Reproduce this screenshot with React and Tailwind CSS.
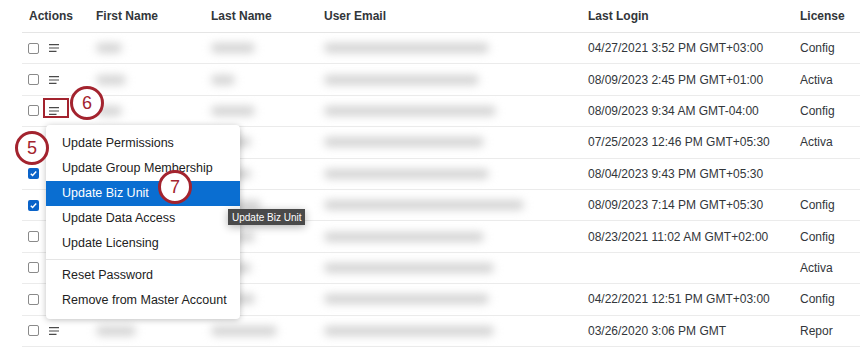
import React from 'react';

const rows = [
  { first: 26, last: 44, email: 165, login: '04/27/2021 3:52 PM GMT+03:00', lic: 'Config', menu: true },
  { first: 30, last: 24, email: 155, login: '08/09/2023 2:45 PM GMT+01:00', lic: 'Activa', menu: true },
  { first: 26, last: 44, email: 172, login: '08/09/2023 9:34 AM GMT-04:00', lic: 'Config', menu: true },
  { first: 30, last: 40, email: 160, login: '07/25/2023 12:46 PM GMT+05:30', lic: 'Activa', menu: true },
  { first: 34, last: 40, email: 165, login: '08/04/2023 9:43 PM GMT+05:30', lic: '', checked: true },
  { first: 30, last: 50, email: 200, login: '08/09/2023 7:14 PM GMT+05:30', lic: 'Config', checked: true },
  { first: 30, last: 44, email: 160, login: '08/23/2021 11:02 AM GMT+02:00', lic: 'Config' },
  { first: 32, last: 40, email: 170, login: '', lic: 'Activa' },
  { first: 30, last: 44, email: 165, login: '04/22/2021 12:51 PM GMT+03:00', lic: 'Config' },
  { first: 40, last: 66, email: 170, login: '03/26/2020 3:06 PM GMT', lic: 'Repor', menu: true },
];

function Hamburger() {
  return (
    <svg width="12" height="10" viewBox="0 0 12 10" className="text-[#4a4a4a]">
      <path d="M1 1.7h10M1 5h10M1 8.3h7.5" stroke="currentColor" strokeWidth="1.2" fill="none" />
    </svg>
  );
}

function Checkbox({ checked }) {
  if (checked) {
    return (
      <div className="w-[11px] h-[11px] rounded-[2px] bg-[#0a63c9] flex items-center justify-center">
        <svg width="9" height="9" viewBox="0 0 10 10">
          <path d="M2 5.2l2 2 4-4.4" stroke="white" strokeWidth="1.6" fill="none" />
        </svg>
      </div>
    );
  }
  return <div className="w-[11px] h-[11px] rounded-[2px] border border-[#8a8a8a] bg-white" />;
}

function Blur({ w }) {
  return <div className="h-[10px] rounded-full bg-[#d4d4d4] blur-[4px]" style={{ width: w }} />;
}

function Badge({ n, className }) {
  return (
    <div className={`absolute w-[34px] h-[34px] rounded-full border-[3px] border-[#a3232e] bg-white flex items-center justify-center text-[#a3232e] text-[18px] ${className}`}>
      {n}
    </div>
  );
}

const menuItems = ['Update Permissions', 'Update Group Membership', 'Update Biz Unit', 'Update Data Access', 'Update Licensing'];

export default function App() {
  return (
    <div className="relative w-[860px] h-[351px] overflow-hidden bg-white text-[12px] text-[#32363a]" style={{ fontFamily: '"Liberation Sans", Arial, sans-serif' }}>
      <div className="flex h-[33px] items-center ml-[22px] pl-[7px] font-bold text-[12px] text-[#32363a] border-b border-[#e5e5e5]">
        <div className="w-[67px]">Actions</div>
        <div className="w-[115px]">First Name</div>
        <div className="w-[113px]">Last Name</div>
        <div className="w-[264px]">User Email</div>
        <div className="w-[212px]">Last Login</div>
        <div>License</div>
      </div>
      <div className="ml-[22px]">
        {rows.map((r, i) => (
          <div key={i} className="flex h-[31.4px] items-center border-b border-[#ebebeb]">
            <div className="w-[26px] pl-[6px]"><Checkbox checked={r.checked} /></div>
            <div className="w-[48px] flex">{r.menu && <Hamburger />}</div>
            <div className="w-[115px]"><Blur w={r.first} /></div>
            <div className="w-[113px]"><Blur w={r.last} /></div>
            <div className="w-[264px]"><Blur w={r.email} /></div>
            <div className="w-[212px]">{r.login}</div>
            <div>{r.lic}</div>
          </div>
        ))}
      </div>

      {/* red highlight box */}
      <div className="absolute left-[43px] top-[98px] w-[26px] h-[20px] border-2 border-[#a3232e]" />

      {/* context menu */}
      <div className="absolute left-[46px] top-[125px] w-[194px] bg-white rounded-[4px] shadow-[0_1px_6px_rgba(0,0,0,0.25)] py-[6px] text-[12.5px]">
        {menuItems.map((m) => (
          <div key={m} className={`h-[25px] flex items-center pl-[16px] ${m === 'Update Biz Unit' ? 'bg-[#0a6ed1] text-white' : 'text-[#222]'}`}>{m}</div>
        ))}
        <div className="my-[3px] border-t border-[#e5e5e5]" />
        <div className="h-[25px] flex items-center pl-[16px] text-[#222]">Reset Password</div>
        <div className="h-[25px] flex items-center pl-[16px] text-[#222]">Remove from Master Account</div>
      </div>

      {/* tooltip */}
      <div className="absolute left-[228px] top-[209px] h-[16px] px-[4px] bg-[#4a4a4a] text-white text-[10px] flex items-center shadow-[0_2px_8px_rgba(0,0,0,0.3)]">Update Biz Unit</div>

      <Badge n="6" className="left-[70px] top-[86px]" />
      <Badge n="5" className="left-[15px] top-[131px]" />
      <Badge n="7" className="left-[158px] top-[170px]" />
    </div>
  );
}
